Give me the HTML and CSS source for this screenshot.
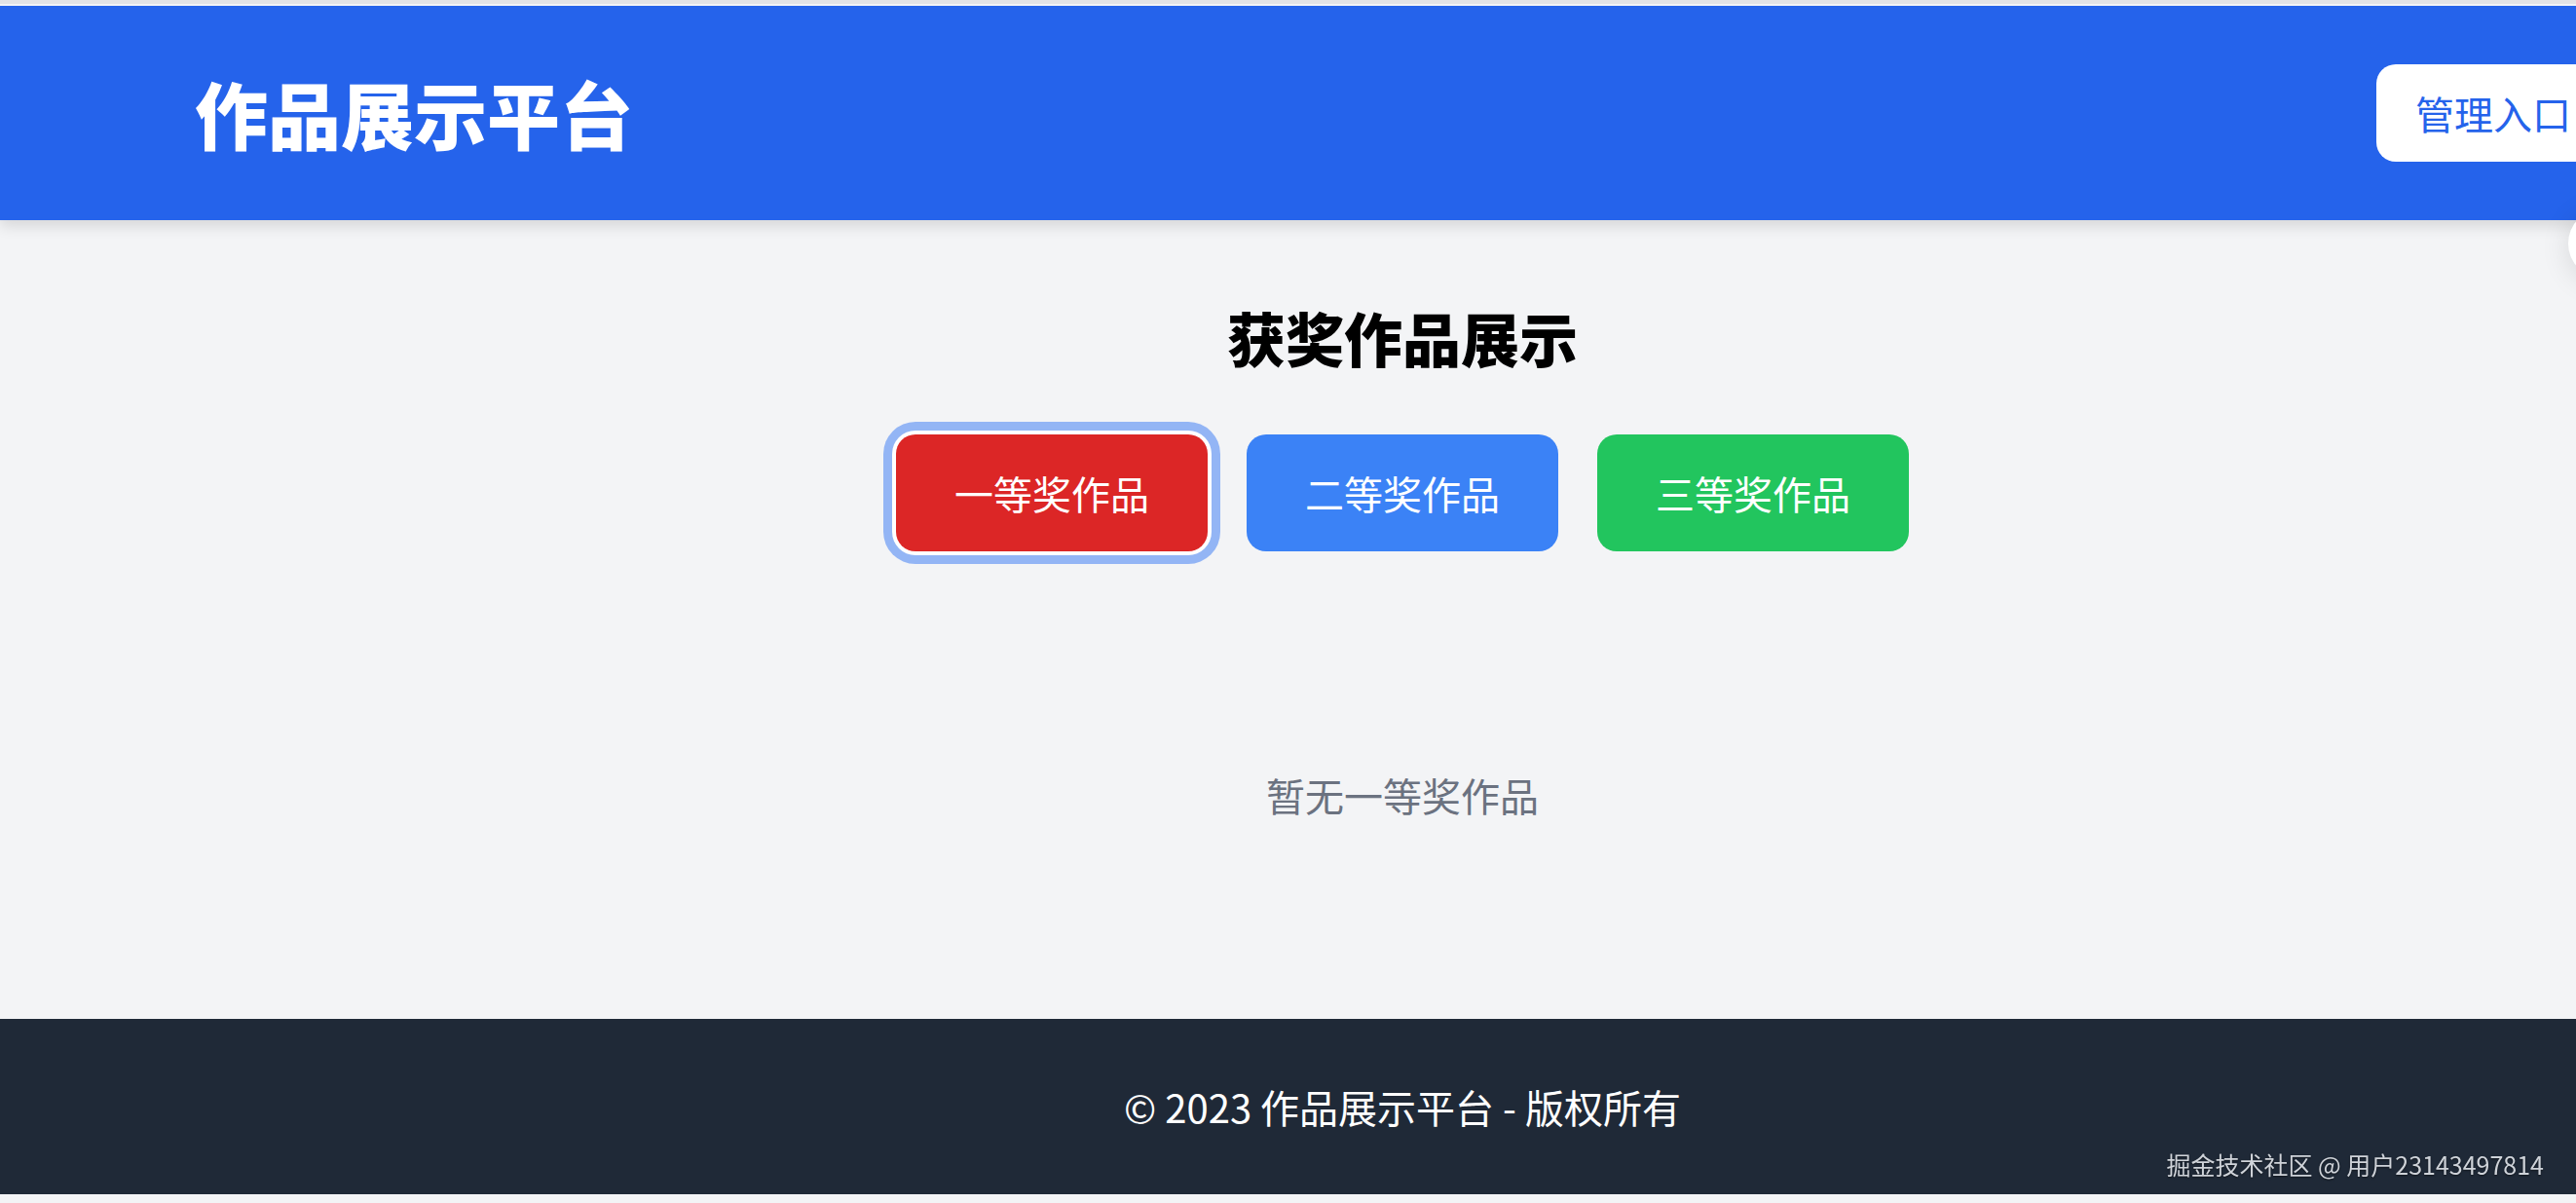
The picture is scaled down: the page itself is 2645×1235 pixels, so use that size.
FILE: index.html
```html
<!DOCTYPE html>
<html lang="zh-CN">
<head>
    <meta charset="UTF-8">
    <meta name="viewport" content="width=device-width, initial-scale=1.0">
    <title>作品展示平台</title>
    <link rel="stylesheet" href="styles.css">
</head>
<body>
    <div class="tela">
        <div class="page">
            <header class="topo">
                <div class="container topo-linha">
                    <h1 class="logo">作品展示平台</h1>
                    <a class="btn-admin" href="#">管理入口</a>
                </div>
            </header>

            <main class="container conteudo">
                <h2 class="titulo">获奖作品展示</h2>
                <div class="abas">
                    <button class="aba aba-primeiro ativa">一等奖作品</button>
                    <button class="aba aba-segundo">二等奖作品</button>
                    <button class="aba aba-terceiro">三等奖作品</button>
                </div>
                <div class="lista">
                    <p class="vazio">暂无一等奖作品</p>
                </div>
            </main>

            <footer class="rodape">
                <p>© 2023 作品展示平台 - 版权所有</p>
            </footer>
        </div>
    </div>

    <div class="flutuante"></div>
    <div class="marca">掘金技术社区 @ 用户23143497814</div>
</body>
</html>
```

FILE: styles.css
```css
*{
    margin: 0;
    padding: 0;
    box-sizing: border-box;
}

body{
    background-color: #f3f4f6;
    font-family: "Noto Sans CJK SC", "Noto Sans", sans-serif;
    overflow: hidden;
    border-top: 4px solid #e2e3e6;
    padding-top: 2px;
    min-height: 100vh;
}

/* a pagina e mais larga que a janela, o resto fica cortado */
.tela{
    width: 100%;
    overflow: hidden;
}

.page{
    width: 2880px;
}

.container{
    width: 2560px;
    margin: 0 auto;
    padding: 0 40px;
}

/* ===== topo ===== */
.topo{
    background-color: #2563eb;
    color: #fff;
    padding: 60px 0;
    box-shadow: 0 6px 14px rgba(0, 0, 0, 0.12);
    position: relative;
}

.topo-linha{
    display: flex;
    justify-content: space-between;
    align-items: center;
}

.logo{
    font-size: 75px;
    font-weight: 900;
    line-height: 90px;
}

.btn-admin{
    background-color: #fff;
    color: #2563eb;
    text-decoration: none;
    font-size: 40px;
    line-height: 60px;
    padding: 20px 40px;
    border-radius: 20px;
}

/* ===== conteudo ===== */
.conteudo{
    padding-top: 80px;
    padding-bottom: 80px;
    text-align: center;
}

.titulo{
    font-size: 60px;
    font-weight: 900;
    line-height: 80px;
    color: #000;
    margin-bottom: 60px;
}

.abas{
    display: flex;
    justify-content: center;
    gap: 40px;
    margin-bottom: 100px;
}

.aba{
    border: none;
    color: #fff;
    font-family: inherit;
    font-size: 40px;
    line-height: 60px;
    padding: 30px 60px;
    border-radius: 20px;
    cursor: pointer;
}

.aba-primeiro{ background-color: #dc2626; }
.aba-segundo{ background-color: #3b82f6; }
.aba-terceiro{ background-color: #22c55e; }

.aba.ativa{
    box-shadow: 0 0 0 4px #fff, 0 0 0 13px #93b5f5;
}

.lista{
    padding: 120px 0;
}

.vazio{
    font-size: 40px;
    line-height: 60px;
    color: #6b7280;
}

/* ===== rodape ===== */
.rodape{
    background-color: #1f2937;
    color: #fff;
    text-align: center;
    padding: 60px 0;
    font-size: 40px;
    line-height: 60px;
}

/* botao flutuante que fica meio fora da tela */
.flutuante{
    position: fixed;
    left: 2637px;
    top: 214px;
    width: 72px;
    height: 72px;
    border-radius: 50%;
    background-color: #fff;
    box-shadow: 0 4px 30px rgba(0, 0, 0, 0.12);
}

.marca{
    position: fixed;
    right: 33px;
    bottom: 22px;
    font-size: 25px;
    color: #cfd3d9;
    text-shadow: 0 1px 2px rgba(0, 0, 0, 0.5);
}
```
